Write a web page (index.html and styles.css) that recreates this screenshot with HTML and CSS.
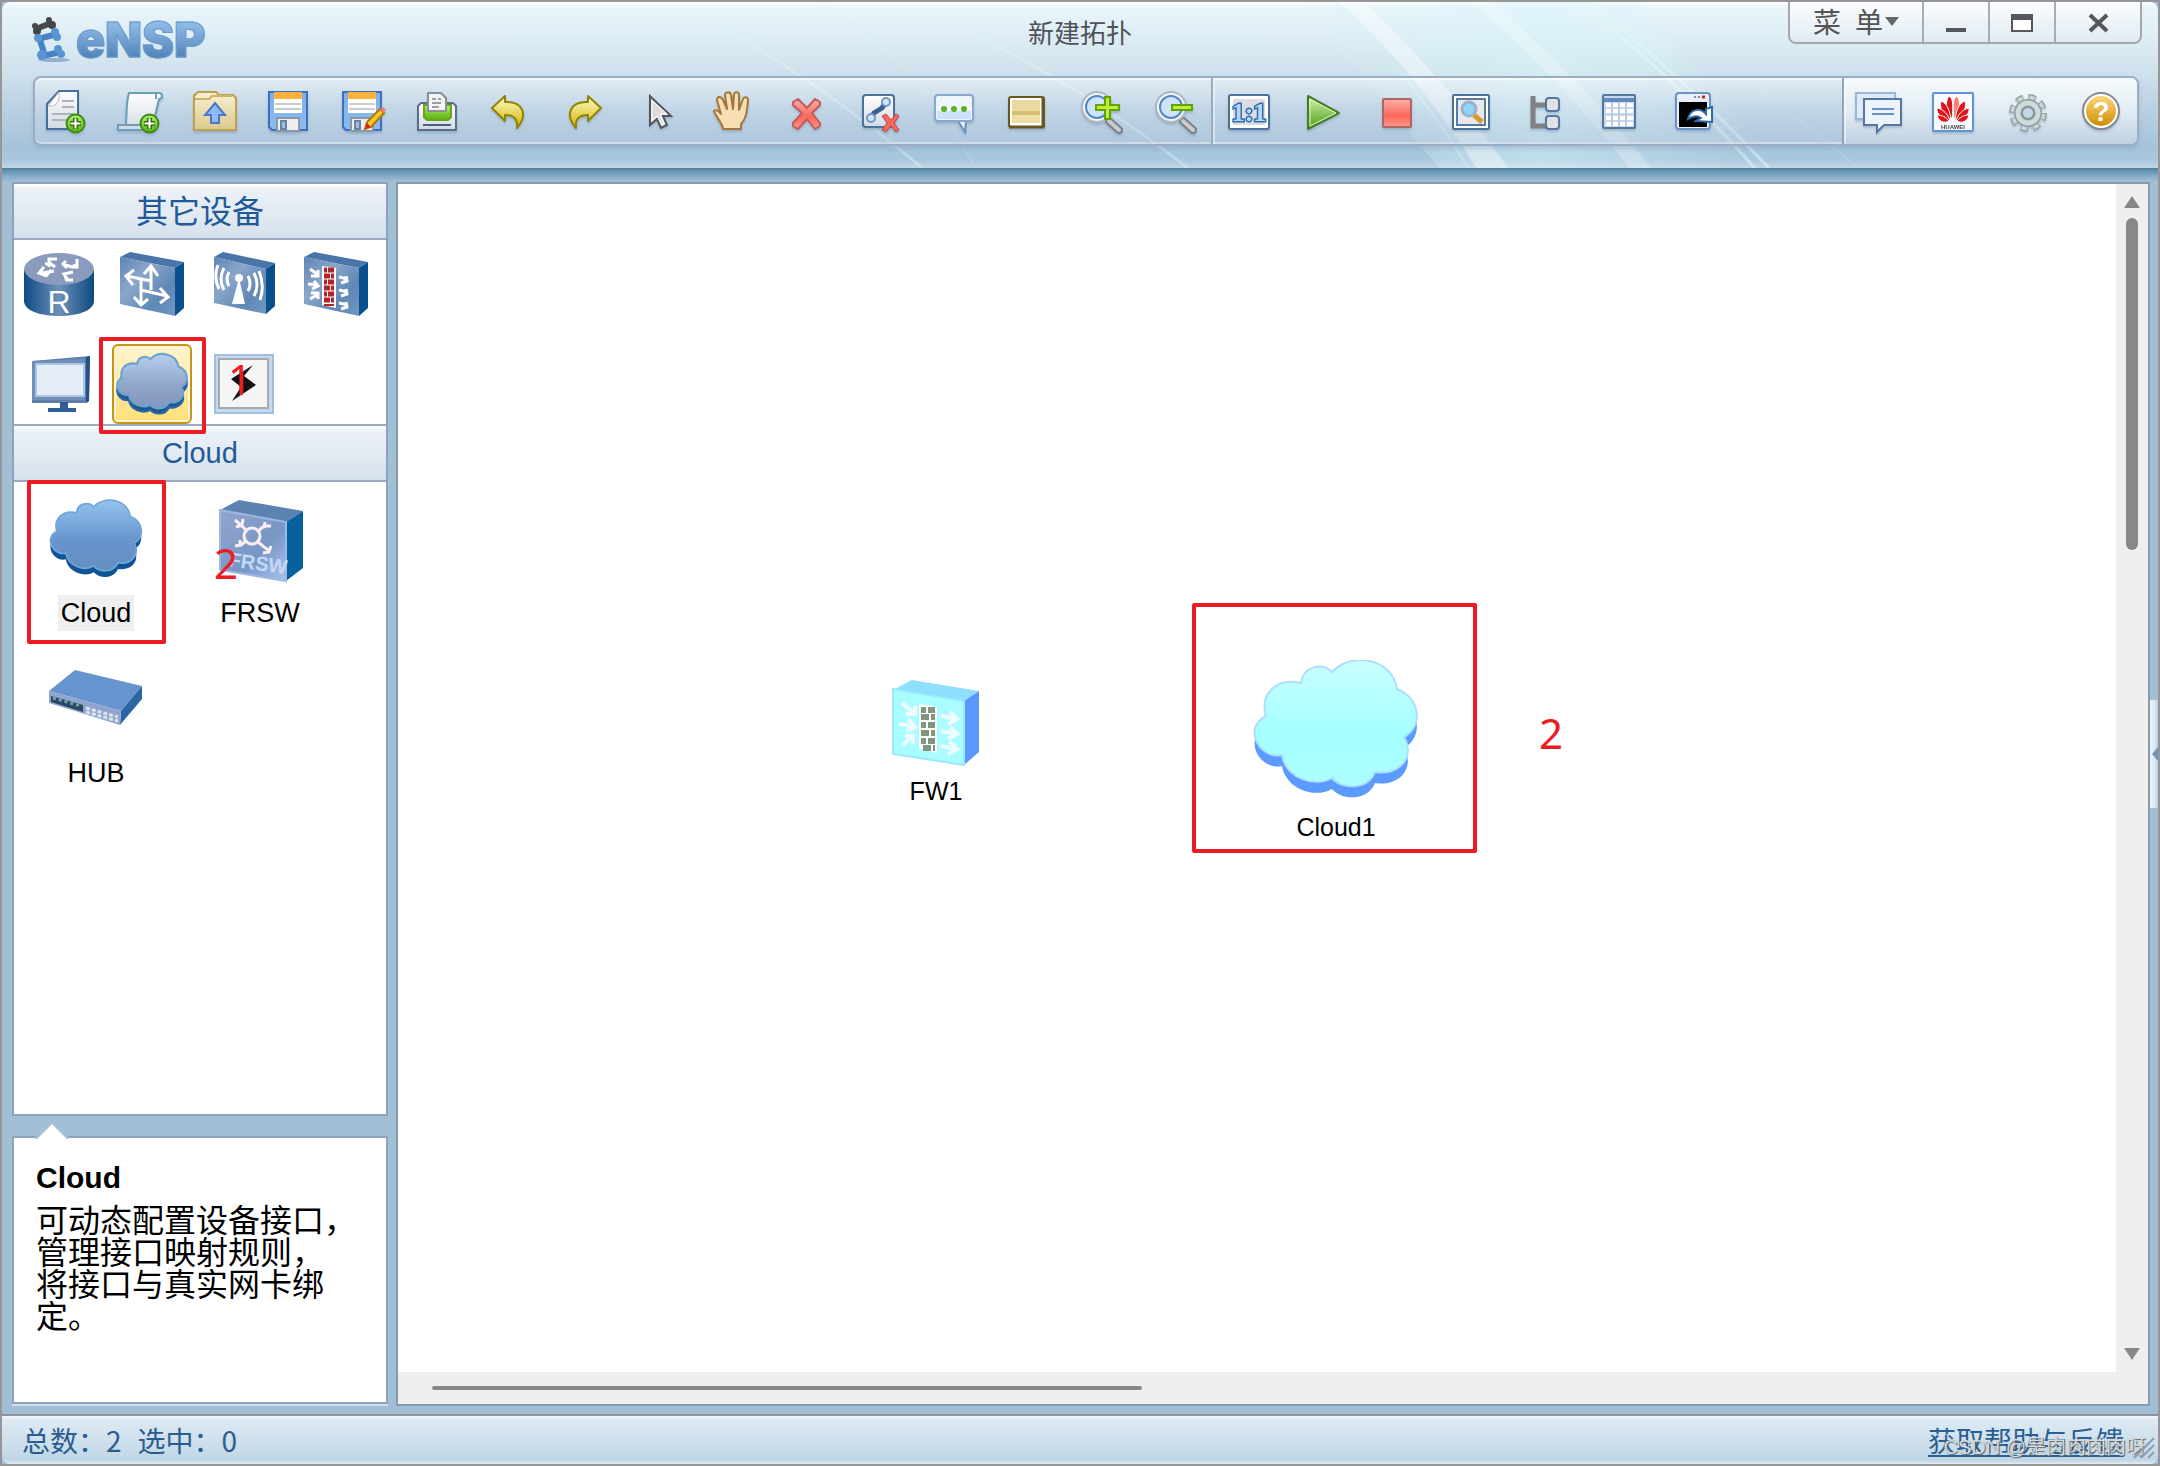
FILE: index.html
```html
<!DOCTYPE html>
<html lang="zh-CN">
<head>
<meta charset="utf-8">
<meta name="viewport" content="width=device-width, initial-scale=1">
<title>eNSP</title>
<link rel="stylesheet" href="styles.css">
</head>
<body>
<svg class="defs" aria-hidden="true">
  <defs>
    <linearGradient id="gPaper" x1="0" y1="0" x2="0" y2="1"><stop offset="0" stop-color="#fff"/><stop offset="1" stop-color="#d3d9e2"/></linearGradient>
    <linearGradient id="gGreen" x1="0" y1="0" x2="0" y2="1"><stop offset="0" stop-color="#b4ee72"/><stop offset="1" stop-color="#55b10f"/></linearGradient>
    <linearGradient id="gGold" x1="0" y1="0" x2="0" y2="1"><stop offset="0" stop-color="#fffbc9"/><stop offset="1" stop-color="#d4b400"/></linearGradient>
    <linearGradient id="gSand" x1="0" y1="0" x2="0" y2="1"><stop offset="0" stop-color="#f9f1d4"/><stop offset="1" stop-color="#dbc98c"/></linearGradient>
    <linearGradient id="gDisk" x1="0" y1="0" x2="0" y2="1"><stop offset="0" stop-color="#7fb0ea"/><stop offset="1" stop-color="#8cbcec"/></linearGradient>
    <linearGradient id="gRed" x1="0" y1="0" x2="0" y2="1"><stop offset="0" stop-color="#fbb0aa"/><stop offset=".6" stop-color="#fa6758"/><stop offset="1" stop-color="#fb9c90"/></linearGradient>
    <linearGradient id="gPlay" x1="0" y1="0" x2="0" y2="1"><stop offset="0" stop-color="#d8efb4"/><stop offset="1" stop-color="#45a00d"/></linearGradient>
    <linearGradient id="gFace" x1="0" y1="0" x2="1" y2="1"><stop offset="0" stop-color="#5f84b4"/><stop offset=".35" stop-color="#8aa6cb"/><stop offset=".7" stop-color="#5f88b5"/><stop offset="1" stop-color="#7196c2"/></linearGradient>
    <linearGradient id="gBarrel"><stop offset="0" stop-color="#0d4c85"/><stop offset=".5" stop-color="#6d90b8"/><stop offset="1" stop-color="#0c4a82"/></linearGradient>
    <linearGradient id="gCloudA" x1="0" y1="0" x2="0" y2="1"><stop offset="0" stop-color="#b5cff0"/><stop offset=".6" stop-color="#8fa4c6"/><stop offset="1" stop-color="#8396bd"/></linearGradient>
    <linearGradient id="gCloudB" x1="0" y1="0" x2="0" y2="1"><stop offset="0" stop-color="#93c3ee"/><stop offset=".55" stop-color="#6795cd"/><stop offset="1" stop-color="#658ec0"/></linearGradient>
    <linearGradient id="gCloudC" x1="0" y1="0" x2="0" y2="1"><stop offset="0" stop-color="#c9ffff"/><stop offset=".6" stop-color="#a4ffff"/><stop offset="1" stop-color="#aeffff"/></linearGradient>
    <linearGradient id="gFrsw" x1="0" y1="0" x2="1" y2="1"><stop offset="0" stop-color="#92a6cf"/><stop offset=".6" stop-color="#7896c4"/><stop offset="1" stop-color="#a9c4ee"/></linearGradient>
    <linearGradient id="gHelp" x1="0" y1="0" x2="0" y2="1"><stop offset="0" stop-color="#fbd77c"/><stop offset="1" stop-color="#d18c06"/></linearGradient>
    <path id="cloudShape" d="M14 56C8 36 22 17 49 23C51 6 70 2 80 12C98-8 140-3 145 29C168 38 172 66 152 77C164 98 146 116 123 112C116 130 90 130 80 118C62 128 34 118 30 95C8 100-10 68 14 56Z"/>
    <g id="plusBadge"><circle cx="9.500" cy="9.500" r="9" fill="url(#gGreen)" stroke="#3d8a14" stroke-width="2"/><path d="M9.500 4v11M4 9.500h11" stroke="#2f7408" stroke-width="5"/><path d="M9.500 4.500v10M4.500 9.500h10" stroke="#fff" stroke-width="2"/></g>
    <g id="floppy"><path d="M5 5h38v38H8l-3-3z" fill="url(#gDisk)" stroke="#3f70bd" stroke-width="2"/><path d="M10 5h28v7H10z" fill="#fbb040"/><path d="M10 12h28v14H10z" fill="#fff"/><path d="M11 17h26M11 22h26" stroke="#c9cdd2" stroke-width="2"/><path d="M13 31h22v13H13z" fill="#eee" stroke="#8b98a8" stroke-width="2"/><path d="M17 34h5v8h-5z" fill="#a7bcd6" stroke="#6484ac" stroke-width="2"/></g>
    <g id="lens"><path d="M31 34l10 9" stroke="#7d8288" stroke-width="8" stroke-linecap="round"/><path d="M31 34l10 9" stroke="#c9ccd0" stroke-width="4" stroke-linecap="round"/><circle cx="19" cy="20" r="15" fill="#f1f3f5" stroke="#b0b5ba" stroke-width="2"/><circle cx="19" cy="20" r="11" fill="#cfe4fb" stroke="#5288c6" stroke-width="2"/></g>
  </defs>
</svg>

<header class="header">
  <svg class="glare" viewBox="0 0 2160 166" preserveAspectRatio="none" aria-hidden="true">
    <defs>
      <linearGradient id="gGlow"><stop offset="0" stop-color="#d8f6fa" stop-opacity="0"/><stop offset=".5" stop-color="#d8f6fa" stop-opacity=".5"/><stop offset="1" stop-color="#d8f6fa" stop-opacity="0"/></linearGradient>
    </defs>
    <path d="M1300 0H1640L1780 166H1440Z" fill="url(#gGlow)"/>
    <path d="M1341 0h24q80 76 144 166h-32q-55-90-136-166z" fill="#fff" opacity=".4"/>
    <path d="M1335 0q75 70 134 166" stroke="#d5eff6" stroke-width="2" fill="none" opacity=".5"/>
    <path d="M1474 0h18q90 76 160 166h-22q-60-80-156-166z" fill="#fff" opacity=".25"/>
    <path d="M1580 0q100 80 176 166M1590 0q100 80 180 166" stroke="#e0fafa" stroke-width="3" fill="none" opacity=".5"/>
    <path d="M700 12Q820 80 922 166M980 36Q1090 90 1188 166" stroke="#dff6fa" stroke-width="3" fill="none" opacity=".4"/>
    <path d="M1740 70l120 96M820 0q100 60 155 166" stroke="#d5f0f6" stroke-width="2" fill="none" opacity=".2"/>
  </svg>
  <div class="titlebar">
    <div class="brand">
      <svg width="40" height="46" viewBox="0 0 40 46" aria-hidden="true">
        <ellipse cx="24" cy="43" rx="16" ry="2" fill="#8fb0d0"/>
        <path d="M6 12L21 6" stroke="#4a4b4d" stroke-width="6"/>
        <g fill="#444548"><circle cx="5" cy="9" r="3"/><circle cx="7" cy="14" r="4"/><circle cx="19" cy="3" r="3"/><circle cx="22" cy="8" r="4"/></g>
        <path d="M8 22L27 17M10 23L14 36M13 39L30 35" stroke="#4683c3" stroke-width="6" fill="none"/>
        <g fill="#5b94d0"><circle cx="8" cy="21" r="4"/><circle cx="25" cy="15" r="4"/><circle cx="27" cy="20" r="4"/><circle cx="12" cy="38" r="5"/><circle cx="28" cy="32" r="4"/><circle cx="31" cy="37" r="4"/></g>
      </svg>
      <span class="brand-name">eNSP</span>
    </div>
    <h1 class="title">新建拓扑</h1>
    <div class="window-controls">
      <button class="menu-button" type="button"><span>菜</span><span>单</span><i class="caret"></i></button>
      <button type="button" aria-label="最小化"><svg width="32" height="32" viewBox="0 0 32 32"><path d="M6 24h20" stroke="#56575c" stroke-width="4"/></svg></button>
      <button type="button" aria-label="最大化"><svg width="32" height="32" viewBox="0 0 32 32"><path d="M6 9h20v16H6z" fill="#fff" stroke="#56575c" stroke-width="2"/><path d="M5 8h22v6H5z" fill="#56575c"/></svg></button>
      <button class="close" type="button" aria-label="关闭"><svg width="32" height="32" viewBox="0 0 32 32"><path d="M8 9l17 16M25 9L8 25" stroke="#56575c" stroke-width="4"/></svg></button>
    </div>
  </div>

  <nav class="toolbar" aria-label="工具栏">
    <div class="tools">
      <button type="button" aria-label="新建拓扑"><svg viewBox="0 0 48 48"><path d="M5 17L17 4h19v38H5z" fill="url(#gPaper)" stroke="#486f9c" stroke-width="2"/><path d="M6 19c9 1 12-5 11-14z" fill="#fff" stroke="#b9bcc2"/><path d="M20 14h12M20 20h12M10 27h22M10 33h14" stroke="#a9b3c2" stroke-width="2"/><use href="#plusBadge" x="24" y="27"/></svg></button>
      <button type="button" aria-label="新建试卷"><svg viewBox="0 0 48 48"><path d="M13 6h30c4 0 4 6 0 6-2 10-5 18-6 31H2v-5h8c1-14 0-22 3-32z" fill="url(#gPaper)" stroke="#6b9fba" stroke-width="2"/><path d="M10 38h22M40 7v5" stroke="#6b9fba" stroke-width="2"/><use href="#plusBadge" x="24" y="27"/></svg></button>
      <button type="button" aria-label="打开"><svg viewBox="0 0 48 48"><path d="M5 8l3-3h18l3 3h14l3 3v32H4V8z" fill="url(#gSand)" stroke="#bfa04f" stroke-width="2"/><path d="M5 12h14l3-3h20" stroke="#cdb36b" stroke-width="2" fill="none"/><path d="M25 16l10 12h-6v8h-8v-8h-6z" fill="#8fbaf5" stroke="#4a78c6" stroke-width="2"/></svg></button>
      <button type="button" aria-label="保存"><svg viewBox="0 0 48 48"><use href="#floppy"/></svg></button>
      <button type="button" aria-label="另存为"><svg viewBox="0 0 48 48"><use href="#floppy"/><path d="M27 42l2-7 13-13 4 4-13 14z" fill="#ffc928" stroke="#b27509" stroke-width="2"/><path d="M42 22l3-2 3 3-3 3z" fill="#f08080"/><path d="M27 42l2-6 4 4z" fill="#d4232b"/></svg></button>
      <button type="button" aria-label="打印"><svg viewBox="0 0 48 48"><path d="M6 19l3-3h32l3 3v24H6z" fill="url(#gPaper)" stroke="#5b6f8a" stroke-width="2"/><path d="M11 38h28" stroke="#4a6289" stroke-width="2"/><path d="M12 18h27v12l-3 3H15l-3-3z" fill="url(#gGreen)" stroke="#6da116" stroke-width="2"/><path d="M16 6h13l5 5v13H16z" fill="#f4f5f7" stroke="#8b8f96" stroke-width="2"/><path d="M20 12h4M26 12h3M20 16h9M20 20h7" stroke="#9b9ea5" stroke-width="2"/></svg></button>
      <button type="button" aria-label="撤销"><svg viewBox="0 0 48 48"><path d="M6 21L19 9v6c17-1 24 12 12 26 1-9-3-13-12-13v6z" fill="url(#gGold)" stroke="#8f8500" stroke-width="2" stroke-linejoin="round"/></svg></button>
      <button type="button" aria-label="恢复"><svg viewBox="0 0 48 48"><path d="M41 21L28 9v6c-17-1-24 12-12 26-1-9 3-13 12-13v6z" fill="url(#gGold)" stroke="#8f8500" stroke-width="2" stroke-linejoin="round"/></svg></button>
      <button type="button" aria-label="选择"><svg viewBox="0 0 48 48"><path d="M16 9v29l7-6 4 9 6-3-4-9h8z" fill="#dcdcde" stroke="#55565a" stroke-width="2"/><path d="M18 14v20l5-5 5 9 2-1-4-10h7z" fill="none" stroke="#fff"/></svg></button>
      <button type="button" aria-label="拖动"><svg viewBox="0 0 48 48"><path d="M15 42c0-5-7-12-9-18 2-2 5 0 7 3L9 13c0-4 4-4 6 0l4 9-2-14c0-3 5-4 6 0l2 14 1-15c1-3 5-2 5 1v15l4-11c1-3 5-2 5 1-1 12-2 19-7 24v5z" fill="#f7dfb4" stroke="#a6773c" stroke-width="2" stroke-linejoin="round"/></svg></button>
      <button type="button" aria-label="删除"><svg viewBox="0 0 48 48"><path d="M11 15l5-3 9 9 8-9 5 3v3l-8 8 8 10v3l-5 3-8-10-9 10-5-3v-3l9-10-9-8z" fill="url(#gRed)" stroke="#c75b5b" stroke-width="2" stroke-linejoin="round"/></svg></button>
      <button type="button" aria-label="删除连线"><svg viewBox="0 0 48 48"><rect x="7" y="8" width="31" height="32" rx="3" fill="url(#gPaper)" stroke="#4e7198" stroke-width="2"/><path d="M15 31l3-5 8-5 4-6" stroke="#3a6290" stroke-width="5" fill="none"/><circle cx="15" cy="31" r="4" fill="#d5e6fb" stroke="#6d98cc" stroke-width="2"/><circle cx="30" cy="15" r="4" fill="#d5e6fb" stroke="#6d98cc" stroke-width="2"/><path d="M26 29l4-2 5 6 5-6 3 2-5 7 5 7-3 2-5-6-5 6-4-2 5-7z" fill="#f4695e" stroke="#bd4545"/></svg></button>
      <button type="button" aria-label="描述"><svg viewBox="0 0 48 48"><path d="M36 34l-1 11-7-11z" fill="#eaf2fd" stroke="#6c91bb" stroke-width="2"/><rect x="5" y="8" width="38" height="26" rx="3" fill="#eef5ff" stroke="#86a7ce" stroke-width="2"/><path d="M7 24h34v8H7z" fill="#cfe2fc"/><g fill="#5fae28"><circle cx="14" cy="22" r="3"/><circle cx="24" cy="22" r="3"/><circle cx="34" cy="22" r="3"/></g></svg></button>
      <button type="button" aria-label="调色板"><svg viewBox="0 0 48 48"><rect x="5" y="10" width="35" height="30" rx="2" fill="#fff" stroke="#6b561c" stroke-width="2"/><path d="M5 40h34V11" fill="none" stroke="#6b561c" stroke-width="3"/><path d="M8 13h28v11H8z" fill="#ead9a0"/><path d="M8 24h28v4H8z" fill="#d3bf74"/><path d="M8 28h28v8H8z" fill="#eedea4"/></svg></button>
      <button type="button" aria-label="放大"><svg viewBox="0 0 48 48"><use href="#lens"/><path d="M27 10h5v8h9v5h-9v9h-5v-9h-9v-5h9z" fill="#c4ea3b" stroke="#5da500" stroke-width="2"/></svg></button>
      <button type="button" aria-label="缩小"><svg viewBox="0 0 48 48"><use href="#lens"/><path d="M20 18h20v5H20z" fill="#c4ea3b" stroke="#5da500" stroke-width="2"/></svg></button>
    </div>
    <div class="tools">
      <button type="button" aria-label="恢复比例"><svg viewBox="0 0 48 48"><rect x="4" y="8" width="40" height="34" rx="2" fill="#fff" stroke="#4c719c" stroke-width="2"/><rect x="8" y="12" width="32" height="26" fill="#dcdde0"/><text x="24" y="34" text-anchor="middle" class="ratio">1:1</text></svg></button>
      <button type="button" aria-label="开启设备"><svg viewBox="0 0 48 48"><path d="M9 9l31 17L9 42z" fill="url(#gPlay)" stroke="#44801e" stroke-width="2" stroke-linejoin="round"/><path d="M11 12l26 14-26 13z" fill="none" stroke="#e2f5cc"/></svg></button>
      <button type="button" aria-label="停止设备"><svg viewBox="0 0 48 48"><rect x="10" y="12" width="28" height="28" rx="1" fill="url(#gRed)" stroke="#ae6661" stroke-width="2"/></svg></button>
      <button type="button" aria-label="数据抓包"><svg viewBox="0 0 48 48"><rect x="6" y="8" width="36" height="34" rx="1" fill="#fff" stroke="#4c719c" stroke-width="2"/><rect x="10" y="12" width="28" height="26" fill="#e8e9eb" stroke="#567ba5" stroke-width="2"/><path d="M27 28l8 7" stroke="#d69c2c" stroke-width="5"/><circle cx="22" cy="22" r="7" fill="#8fd5f7" stroke="#9ab3cb" stroke-width="3"/></svg></button>
      <button type="button" aria-label="显示所有接口"><svg viewBox="0 0 48 48"><path d="M12 9v30h14M12 18h14" fill="none" stroke="#808184" stroke-width="5"/><rect x="25" y="11" width="13" height="13" rx="3" fill="#e1e2e6" stroke="#56779f" stroke-width="2"/><rect x="25" y="29" width="13" height="13" rx="3" fill="#e1e2e6" stroke="#56779f" stroke-width="2"/></svg></button>
      <button type="button" aria-label="显示网格"><svg viewBox="0 0 48 48"><rect x="8" y="8" width="32" height="33" rx="1" fill="#c6d8ec" stroke="#54779f" stroke-width="2"/><path d="M9 11h30v4H9z" fill="#6388bf"/><path d="M11 18h27M11 24h27M11 31h27M11 37h27" stroke="#fff" stroke-width="4"/><path d="M17 16v23M24 16v23M31 16v23" stroke="#b9cce4" stroke-width="2"/></svg></button>
      <button type="button" aria-label="打开命令行"><svg viewBox="0 0 48 48"><rect x="7" y="6" width="34" height="36" rx="3" fill="#e8eff9" stroke="#6a93c5" stroke-width="2"/><path d="M10 15h28v25H10z"/><path d="M25 10h2M29 10h2" stroke="#888" stroke-width="2"/><path d="M33 10h3" stroke="#e02020" stroke-width="3"/><path d="M19 32c2-10 12-12 18-5v-5l6-2v15l-16-1 5-3c-4-3-8-2-13 1z" fill="#fff" stroke="#2f6cae" stroke-width="2"/></svg></button>
    </div>
    <div class="tools tools-end">
      <button type="button" aria-label="论坛"><svg viewBox="0 0 48 48"><path d="M9 32H1V6h39v8" fill="#dfeaf7" stroke="#9ab6d8" stroke-width="2"/><path d="M9 12h37v26H29l-7 7v-7H9z" fill="#edf3fb" stroke="#55779f" stroke-width="2"/><path d="M17 22h22M17 27h22" stroke="#6a93c5" stroke-width="2"/></svg></button>
      <button type="button" aria-label="官网"><svg viewBox="0 0 48 48"><rect x="4" y="6" width="40" height="38" rx="1" fill="#f9fbfe" stroke="#5e95d4" stroke-width="2"/><g fill="#e0141c" stroke="#f9fbfe"><path d="M23 32c-5-7-8-16-3-23 5 2 4 14 3 23z"/><path d="M25 32c5-7 8-16 3-23-5 2-4 14-3 23z" fill="#f58472"/><path d="M22 33c-8-5-12-12-10-19 6 2 9 10 10 19z"/><path d="M26 33c8-5 12-12 10-19-6 2-9 10-10 19z"/><path d="M21 34C13 32 7 27 8 21c6 1 11 6 13 13z"/><path d="M27 34c8-2 14-7 13-13-6 1-11 6-13 13z"/><path d="M20 34c-5 3-11 0-12-6 5 0 9 2 12 6z"/><path d="M28 34c5 3 11 0 12-6-5 0-9 2-12 6z"/></g><text x="24" y="42" text-anchor="middle" class="logo-caption">HUAWEI</text></svg></button>
      <button type="button" aria-label="设置"><svg viewBox="0 0 48 48"><circle cx="25" cy="26" r="15.500" fill="none" stroke="#92a0a2" stroke-width="7" stroke-dasharray="7 5.170"/><circle cx="25" cy="26" r="15" fill="none" stroke="#cbd6d6" stroke-width="5" stroke-dasharray="5 6.780" stroke-dashoffset="-1"/><circle cx="25" cy="26" r="10" fill="none" stroke="#8f9fa1" stroke-width="8"/><circle cx="25" cy="26" r="10" fill="none" stroke="#cfdada" stroke-width="5"/><circle cx="25" cy="26" r="6" fill="#c3d7e4" stroke="#84989b" stroke-width="2"/></svg></button>
      <button type="button" aria-label="帮助"><svg viewBox="0 0 48 48"><circle cx="24" cy="24" r="18" fill="#fff" stroke="#87898e" stroke-width="2"/><circle cx="24" cy="24" r="15" fill="url(#gHelp)"/><text x="24" y="34" text-anchor="middle" class="help-mark">?</text></svg></button>
    </div>
  </nav>
</header>

<main class="workspace">
  <aside class="sidebar">
    <section class="devices">
      <h2 class="panel-title">其它设备</h2>
      <div class="palette">
        <button type="button" aria-label="路由器"><svg viewBox="0 0 80 80"><path d="M4 26v31c0 20 70 20 70 0V26z" fill="url(#gBarrel)"/><ellipse cx="39" cy="25" rx="35" ry="16" fill="#8b9bbd"/><g stroke="#fff" stroke-width="3" fill="none"><path d="M35 23l-5-4-5 1M29 23v-8h8M43 20l9 3 5-3M46 17l-3 3 4 4M57 15v8h-6M34 27l-12 2-2-3M24 23l-5 6 8 3M31 26l-5 6M44 29l3 8M53 28l-9 2 4 6h5"/></g><text x="39" y="69" text-anchor="middle" class="router-letter">R</text></svg></button>
        <button type="button" aria-label="交换机"><svg viewBox="0 0 80 80"><path d="M8 13l10-5 54 10-9 6z" fill="#4a75a8"/><path d="M63 24l9-6v46l-9 8z" fill="#0a4f8d"/><path d="M8 13l55 11v48L8 60z" fill="url(#gFace)"/><g stroke="#fff" stroke-width="3" fill="none"><path d="M39 46V24M32 30l7-8 7 10M29 35v26M22 53l7 8 7-6M39 37L15 32M22 26l-8 6 7 9M29 46l26 6M48 44l8 9-8 6"/></g></svg></button>
        <button type="button" aria-label="无线局域网"><svg viewBox="0 0 80 80"><path d="M10 13l9-5 52 11-9 6z" fill="#4a75a8"/><path d="M62 25l9-6v43l-9 8z" fill="#0a4f8d"/><path d="M10 13l52 12v45L10 59z" fill="url(#gFace)"/><path d="M35 34l6 26H28z" fill="#fff"/><circle cx="35" cy="34" r="4" fill="#fff"/><path d="M25 28q-4 7 0 14M20 24q-6 11 0 22M14 21q-5 12 1 24M44 32q4 8 0 15M50 29q6 12 0 23M55 27q6 15 1 29" stroke="#fff" stroke-width="3" fill="none"/></svg></button>
        <button type="button" aria-label="防火墙"><svg viewBox="0 0 80 80"><path d="M8 13l10-5 54 10-9 6z" fill="#4a75a8"/><path d="M63 24l9-6v46l-9 8z" fill="#0a4f8d"/><path d="M8 13l55 11v48L8 60z" fill="url(#gFace)"/><path d="M26 22l14 2v40l-14-3z" fill="#fff"/><path d="M28 26h10M28 38h10M28 50h10" stroke="#b3252b" stroke-width="5" stroke-dasharray="3 1 6"/><path d="M28 32h10M28 44h10M28 56h10" stroke="#b3252b" stroke-width="5" stroke-dasharray="6 1 3"/><path d="M28 61h10" stroke="#b3252b" stroke-width="2"/><g stroke="#fff" stroke-width="3" fill="none"><path d="M14 25l7 5M22 26v6h-7M12 40l10 1M18 37l4 5-6 3M14 55l7-4M15 49h7v6M43 33l9 2M50 32l1 5-6 2M43 46l9 2M50 45l1 5-6 2M43 59l9 2M50 58l1 5-6 2"/></g></svg></button>
        <button type="button" aria-label="终端"><svg viewBox="0 0 80 80"><path d="M12 17l58-5-1 45-3 2H12z" fill="#5c80ab"/><path d="M66 13l4-1-1 45-3 2z" fill="#234f82"/><path d="M12 17l52-2v41H12z" fill="#6f8fb8"/><path d="M16 20h48v32H16z" fill="#e5edf8" stroke="#aac4e4" stroke-width="2"/><path d="M40 58h8v6h8v4H28v-4h12z" fill="#315f96"/></svg></button>
        <div class="marked">
          <button class="selected" type="button" aria-label="其它设备" aria-pressed="true"><svg viewBox="0 0 80 80"><g transform="translate(4 10) scale(.43)"><use href="#cloudShape" y="12" fill="#1c5793" stroke="#2b68a4" stroke-width="5"/><use href="#cloudShape" fill="url(#gCloudA)" stroke="#6fa3cf" stroke-width="5"/></g></svg></button>
          <span class="mark-box"></span>
        </div>
        <div class="marked">
          <button type="button" aria-label="设备连线"><svg viewBox="0 0 80 80"><rect x="11" y="11" width="58" height="58" fill="#c3d9f0" stroke="#a4bddb" stroke-width="2"/><rect x="15" y="15" width="49" height="49" fill="#f5f5f5" stroke="#a7a9ac" stroke-width="2"/><path d="M49 21L40 32l12 9-24 16 9-14-10-8z" fill="#111"/></svg></button>
          <span class="mark-number mark-one">1</span>
        </div>
      </div>
      <h2 class="panel-title panel-title-latin">Cloud</h2>
      <div class="device-list">
        <button class="device device-active" type="button">
          <svg viewBox="0 0 96 96"><g transform="translate(1 10) scale(.56)"><use href="#cloudShape" y="11" fill="#0f5596"/><use href="#cloudShape" fill="url(#gCloudB)" stroke="#6fa8d8" stroke-width="3"/></g></svg>
          <span>Cloud</span><i class="mark-box"></i>
        </button>
        <button class="device" type="button">
          <svg viewBox="0 0 96 96"><path d="M8 20l19-10 64 11-17 11z" fill="#5c83af"/><path d="M74 32l17-11v57L74 91z" fill="#07619f"/><path d="M8 20l66 12v59L8 80z" fill="url(#gFrsw)" stroke="#9db8e4" stroke-width="2"/><g stroke="#fbeef2" stroke-width="3" fill="none"><circle cx="40" cy="46" r="8"/><path d="M34 40l-5-5-6-5M31 29l-1 6-6 2M46 41l6-5h7M53 32l-1 6M34 51l-5 4-6 1M28 50v6M46 52l6 5 6 4M59 56l-2 6-6 1"/></g><text x="16" y="76" transform="rotate(8 16 76)" class="chassis-text">FRSW</text></svg>
          <span>FRSW</span><i class="mark-number mark-two">2</i>
        </button>
        <button class="device" type="button">
          <svg viewBox="0 0 96 96"><path d="M1 41L27 20l67 16-21 25z" fill="#6694cf"/><path d="M73 61l21-25v13L72 75z" fill="#2b65a4"/><path d="M1 41l72 20-1 14L1 53z" fill="#8fa5cb"/><path d="M3 46l32 9v7L3 52z" fill="#294865"/><path d="M5 48l28 8" stroke="#75a3a8" stroke-width="3" stroke-dasharray="3 3"/><path d="M38 58l32 9M38 62l32 9" stroke="#dce4f3" stroke-width="3" stroke-dasharray="4 2"/></svg>
          <span>HUB</span>
        </button>
      </div>
    </section>
    <section class="info">
      <h3>Cloud</h3>
      <p>可动态配置设备接口，<br>管理接口映射规则，<br>将接口与真实网卡绑<br>定。</p>
    </section>
  </aside>

  <section class="canvas" aria-label="拓扑">
    <div class="stage">
      <div class="node node-fw">
        <svg width="88" height="88" viewBox="0 0 88 88"><path d="M1 11L20 1l67 11-15 10z" fill="#8fdfff"/><path d="M72 22l15-10v61L72 86z" fill="#5a98ff"/><path d="M1 10l71 12v64L1 75z" fill="#a9fcff" stroke="#9be9fb" stroke-width="2"/><path d="M27 25l18 3v46l-18-4z" fill="#fff"/><path d="M29 31h14M29 46h14M29 62h14" stroke="#82967c" stroke-width="6" stroke-dasharray="5 2 9"/><path d="M29 38h14M29 54h14M31 69h12" stroke="#82967c" stroke-width="6" stroke-dasharray="8 2 5"/><g stroke="#effcff" stroke-width="4" fill="none"><path d="M10 24l12 10M23 27v8h-9M7 45l14 2M16 40l7 8-9 4M11 66l9-9M13 57h8v8M49 37l15 3M58 33l7 7-9 5M49 52l15 3M58 48l7 7-9 5M49 67l15 3M58 63l7 7-9 5"/></g></svg>
        <span>FW1</span>
      </div>
      <div class="node node-cloud">
        <svg width="168" height="140" viewBox="0 0 168 140"><use href="#cloudShape" y="11" fill="#5b9bff"/><use href="#cloudShape" fill="url(#gCloudC)" stroke="#aadfff" stroke-width="2"/></svg>
        <span>Cloud1</span>
      </div>
      <span class="mark-box mark-cloud"></span>
      <span class="mark-number mark-canvas">2</span>
    </div>
    <div class="scroll-v"><i class="arrow-up"></i><i class="thumb-v"></i><i class="arrow-down"></i></div>
    <div class="scroll-h"><i class="thumb-h"></i></div>
  </section>
  <button class="drawer" type="button" aria-label="展开"></button>
</main>

<footer class="statusbar">
  <p><span>总数：2</span><span>选中：0</span></p>
  <a href="#help">获取帮助与反馈</a>
  <span class="watermark">CSDN @是肉肉肉肉呀</span>
  <svg class="grip" width="24" height="24" viewBox="0 0 24 24" aria-hidden="true"><path d="M2 22L22 2M9 22L22 9M16 22l6-6" stroke="#8d9dab" stroke-width="2"/></svg>
</footer>
</body>
</html>
```
FILE: styles.css
```css
* { box-sizing: border-box; }

body {
  margin: 0;
  min-height: 100vh;
  display: flex;
  flex-direction: column;
  border: 2px solid #969698;
  background: #a3bfd6;
  font-family: "Liberation Sans", "Noto Sans CJK SC", sans-serif;
  overflow: hidden;
}

button {
  margin: 0;
  padding: 0;
  border: 0;
  background: none;
  font: inherit;
  color: inherit;
}

svg { display: block; }
.defs { position: absolute; width: 0; height: 0; }
h1, h2, h3, p { margin: 0; font-weight: 400; }

/* Title bar and toolbar */
.header {
  position: relative;
  padding-bottom: 22px;
  background: linear-gradient(#fff 0, #e8f4fa 6px, #e0eff6 30px, #cfe1ec 70px, #b5cde0 115px, #a6c3db 145px, #aac6dd 158px, #c2d7e6 100%);
  border-radius: 8px 8px 0 0;
}

.glare {
  position: absolute;
  inset: 0;
  width: 100%;
  height: 100%;
}

.titlebar {
  position: relative;
  display: grid;
  grid-template-columns: 1fr auto 1fr;
  height: 74px;
}

.brand {
  display: flex;
  align-items: center;
  gap: 6px;
  padding-left: 28px;
  padding-top: 2px;
}

.brand-name {
  font: 900 48px/50px Inter, "Liberation Sans", sans-serif;
  color: transparent;
  background: linear-gradient(#8db9e6 10px, #4f81b6 44px);
  background-clip: text;
  -webkit-text-stroke: 1px #6d9acb;
}

.title {
  padding-top: 10px;
  font: 26px/40px "Noto Sans CJK SC", sans-serif;
  color: #505257;
}

.window-controls {
  justify-self: end;
  display: flex;
  height: 42px;
  margin-right: 16px;
  border: 2px solid #a5a8ab;
  border-top: 0;
  border-radius: 0 0 8px 8px;
  background: linear-gradient(#fbfdfe, #dfebf3);
}

.window-controls button {
  width: 66px;
  display: flex;
  align-items: center;
  justify-content: center;
  border-left: 2px solid #a9adb1;
}

.window-controls .menu-button {
  width: 132px;
  gap: 14px;
  padding-bottom: 2px;
  border-left: 0;
  font: 28px/36px "Noto Sans CJK SC", sans-serif;
  color: #555;
}

.window-controls .close { width: 86px; }

.caret {
  margin-left: -12px;
  border: 7px solid transparent;
  border-top: 9px solid #666;
  border-bottom: 0;
}

.toolbar {
  position: relative;
  display: flex;
  height: 70px;
  margin: 0 19px 0 31px;
  border: 2px solid #9badc2;
  border-radius: 8px;
  background: linear-gradient(#ffffff66, #d6e2f044 50%, #b9cade66);
  box-shadow: inset 0 2px #ffffffaa, inset 0 -2px #dbe5efaa, 0 3px 4px #7f9fc066;
}

.tools {
  display: flex;
  align-items: center;
  gap: 26px;
  padding: 0 11px 0 7px;
  border-right: 2px solid #9aabbd;
}

.tools + .tools { padding-left: 12px; box-shadow: inset 2px 0 #ffffff77; border-right: 0; }

.tools.tools-end {
  margin-left: auto;
  padding-left: 11px;
  padding-right: 12px;
  border-left: 2px solid #91a5bb;
  border-radius: 0 6px 6px 0;
  background: linear-gradient(#f6fafc, #e3edf4 50%, #c0d1e2);
}

.tools svg { width: 48px; height: 48px; filter: drop-shadow(0 2px 1px #5a7c9c55); }
.ratio { font: 700 26px "Liberation Serif", serif; fill: #b9d6f8; stroke: #2d6db0; stroke-width: 3px; paint-order: stroke; }
.logo-caption { font: 700 6px "Liberation Sans", sans-serif; fill: #444; }
.help-mark { font: 700 28px "Liberation Sans", sans-serif; fill: #fff; }

/* Workspace */
.workspace {
  position: relative;
  flex: 1;
  display: grid;
  grid-template-columns: 376px 1fr;
  gap: 8px;
  padding: 14px 8px 8px 10px;
  background: linear-gradient(#5e8197 0, #5e8197 2px, #5d8fb1 2px, #85abc8 8px, #a3bfd6 14px);
}

.sidebar { display: flex; flex-direction: column; gap: 20px; }

.devices {
  flex: 1;
  border: 2px solid #8da3bd;
  background: #fff;
}

.panel-title {
  height: 56px;
  border-bottom: 2px solid #9aabc0;
  background: linear-gradient(#fff 0, #edf2f9 4px, #e3eaf2 28px, #d4e1ec);
  font: 32px/50px "Noto Sans CJK SC", sans-serif;
  color: #215a98;
  text-align: center;
}

.panel-title-latin {
  height: 58px;
  border-top: 2px solid #9aabc0;
  font: 29px/54px "Liberation Sans", sans-serif;
}

.palette {
  display: grid;
  grid-template-columns: repeat(4, 80px);
  grid-auto-rows: 80px;
  gap: 20px 12px;
  padding: 4px 0 0 6px;
}

.palette button { width: 80px; height: 80px; }
.palette svg { width: 80px; height: 80px; }
.router-letter { font: 32px "Liberation Sans", sans-serif; fill: #fff; }

.palette .selected {
  border: 2px solid #c99416;
  border-radius: 6px;
  background: linear-gradient(#fff4cf, #ffe9a2 50%, #ffdf79);
  box-shadow: inset 0 0 0 2px #fff6d8;
}

.palette .selected svg { margin: -2px; }
.marked { position: relative; }

.mark-box {
  position: absolute;
  z-index: 1;
  inset: -7px -14px -10px -13px;
  border: 4px solid #ed1c24;
  border-radius: 2px;
}

.mark-number {
  position: absolute;
  font: 42px/42px "Noto Sans", sans-serif;
  color: #ed1c24;
}

.mark-one { left: 24px; top: 14px; }
.mark-two { left: 36px; top: 60px; }
.mark-canvas { left: 1141px; top: 528px; }

.device-list {
  display: grid;
  grid-template-columns: 164px 164px;
  grid-auto-rows: 160px;
}

.device {
  position: relative;
  display: flex;
  flex-direction: column;
  align-items: center;
  gap: 9px;
  padding-top: 8px;
  font-size: 27px;
  line-height: 36px;
  color: #000;
}

.device svg { width: 96px; height: 96px; }
.chassis-text { font: 700 20px "Liberation Sans", sans-serif; fill: #c5d9f5; }
.device-active span { padding: 0 3px; background: #efefef; }
.device .mark-box { inset: -2px 12px -2px 13px; }

.info {
  position: relative;
  height: 268px;
  margin-bottom: 2px;
  padding: 24px 22px;
  border: 2px solid #8da3bd;
  background: #fff;
  box-shadow: 0 2px #d3e0ec;
}

.info::before {
  content: "";
  position: absolute;
  left: 26px;
  top: -12px;
  width: 22px;
  height: 22px;
  border: 2px solid #a9bfd3;
  border-right: 0;
  border-bottom: 0;
  background: linear-gradient(135deg, #fff 60%, transparent 60%);
  transform: rotate(45deg);
}

.info h3 { font-size: 30px; font-weight: 700; line-height: 32px; color: #000; }

.info p {
  margin-top: 8px;
  font: 32px/32px "Noto Sans CJK SC", sans-serif;
  color: #000;
  white-space: nowrap;
}

/* Topology canvas */
.canvas {
  display: grid;
  grid-template-columns: 1fr 32px;
  grid-template-rows: 1fr 32px;
  border: 2px solid #8899aa;
  background: #efefef;
}

.stage { position: relative; background: #fff; }

.node {
  position: absolute;
  display: flex;
  flex-direction: column;
  align-items: center;
  gap: 12px;
  font-size: 25px;
  line-height: 30px;
  color: #000;
}

.node-fw { left: 494px; top: 495px; gap: 9px; }
.node-cloud { left: 854px; top: 476px; }
.mark-cloud { inset: 419px auto auto 794px; width: 285px; height: 250px; }

.scroll-v {
  display: flex;
  flex-direction: column;
  align-items: center;
  padding: 12px 0;
}

.arrow-up { border: 8px solid transparent; border-top: 0; border-bottom: 12px solid #888; }
.arrow-down { margin-top: auto; border: 8px solid transparent; border-bottom: 0; border-top: 12px solid #888; }
.thumb-v { width: 12px; height: 28.5%; margin-top: 10px; border-radius: 6px; background: #888; }
.scroll-h { display: flex; align-items: center; padding: 0 34px; }
.thumb-h { width: 43%; height: 4px; border-radius: 2px; background: #888; }

.drawer {
  position: absolute;
  right: 0;
  top: 532px;
  width: 8px;
  height: 108px;
  background: linear-gradient(90deg, #eaf4fb, #dbe9f4 60%, #b8cee0);
}

.drawer::after {
  content: "";
  position: absolute;
  right: 0;
  top: 47px;
  border: 7px solid transparent;
  border-left: 0;
  border-right: 6px solid #6f95b3;
}

/* Status bar */
.statusbar {
  position: relative;
  display: flex;
  align-items: center;
  justify-content: space-between;
  height: 50px;
  padding: 0 34px 0 20px;
  border-top: 2px solid #909498;
  background: linear-gradient(#eef5f9 0, #dce9f3 4px, #cfe1ed 24px, #c0d7e6 44px, #e2edf4);
  border-radius: 0 0 8px 8px;
  font: 28px/40px "Noto Sans CJK SC", sans-serif;
  color: #2c5c8f;
}

.statusbar p { display: flex; gap: 16px; }
.statusbar a { color: #2a5f92; text-underline-offset: 3px; }

.watermark {
  position: absolute;
  right: 12px;
  top: 16px;
  font: 20px/30px "Liberation Sans", "Noto Sans CJK SC", sans-serif;
  color: #d5dadd;
  text-shadow: 1px 1px 1px #5c666e;
}

.grip { position: absolute; right: 2px; bottom: 4px; }
```
